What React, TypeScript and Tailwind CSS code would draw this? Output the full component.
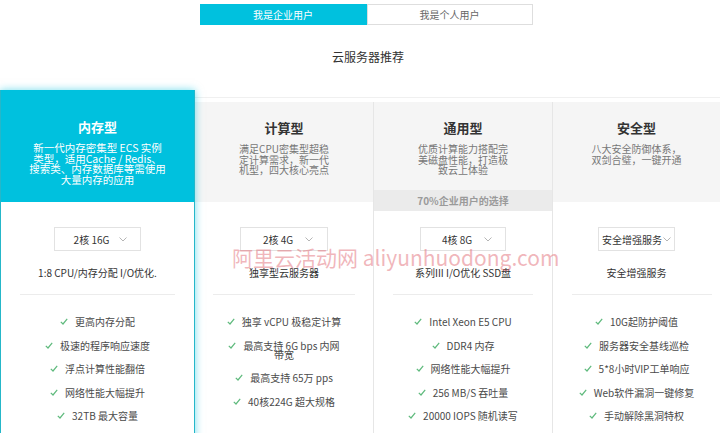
import React from "react";

const Check = () => (
  <svg width="8" height="7" viewBox="0 0 8 7" className="inline-block mr-[7px] align-[1px]">
    <polyline points="0.8,3.8 3,6 7.2,0.8" fill="none" stroke="#5fba7d" strokeWidth="1.2" />
  </svg>
);

const Chevron = () => (
  <svg width="8" height="5" viewBox="0 0 8 5">
    <polyline points="0.5,0.5 4,4 7.5,0.5" fill="none" stroke="#b5b5b5" strokeWidth="1" />
  </svg>
);

function Select({ label, w, gap }: { label: string; w: string; gap: string }) {
  return (
    <div className={`mx-auto h-[24px] border border-[#e2e2e2] bg-white flex items-center justify-center text-[10px] text-[#333] ${w} ${gap}`}>
      <span>{label}</span>
      <Chevron />
    </div>
  );
}

function Features({ items }: { items: React.ReactNode[] }) {
  return (
    <div className="mt-[15px] flex flex-col text-[10px] text-[#4a4a4a] text-center">
      {items.map((it, i) => (
        <div key={i} className="leading-[9px] py-[7.25px]">
          <Check />
          {it}
        </div>
      ))}
    </div>
  );
}

function Divider({ mx }: { mx: string }) {
  return <div className={`mt-[14px] h-px bg-[#ececec] ${mx}`} />;
}

export default function App() {
  return (
    <div className="relative w-[720px] h-[433px] overflow-hidden bg-white font-['Noto_Sans_CJK_SC',sans-serif]">
      {/* tabs */}
      <div className="pt-[4px] flex justify-center pl-[12px]">
        <div className="flex h-[21px] text-[10px]">
          <div className="w-[167px] bg-[#00c1de] text-white flex items-center justify-center">我是企业用户</div>
          <div className="w-[166px] border border-[#dedede] text-[#666] flex items-center justify-center">我是个人用户</div>
        </div>
      </div>

      <div className="mt-[24px] text-center text-[12px] text-[#333] leading-[16px] pl-[16px]">云服务器推荐</div>

      {/* cards */}
      <div className="mt-[25px] flex h-[360px]">
        {/* card 1 selected */}
        <div className="relative z-10 w-[195px] shrink-0 border-x border-[#25b7c9] bg-white shadow-[0_0_8px_rgba(0,193,222,0.55)]">
          <div className="h-[112px] bg-[#00c1de] text-white text-center pt-[29px]">
            <div className="text-[13px] font-bold leading-[16px]">内存型</div>
            <div className="mt-[8px] text-[10.5px] leading-[10.7px]">
              新一代内存密集型 ECS 实例
              <br />
              类型，适用Cache / Redis、
              <br />
              搜索类、内存数据库等需使用
              <br />
              大量内存的应用
            </div>
          </div>
          <div className="pt-[25px]">
            <Select label="2核 16G" w="w-[87px]" gap="gap-[10px] pl-[6px]" />
            <div className="mt-[15px] text-center text-[10px] text-[#333] leading-[14px]">1:8 CPU/内存分配 I/O优化.</div>
            <Divider mx="mx-[19px]" />
            <Features items={["更高内存分配", "极速的程序响应速度", "浮点计算性能翻倍", "网络性能大幅提升", "32TB 最大容量"]} />
          </div>
        </div>

        {/* rest */}
        <div className="flex-1 flex mt-[7px] border-t border-[#f0f0f0] pt-[4px]">
          {/* card 2 */}
          <div className="w-[178px] shrink-0">
            <div className="h-[100px] bg-[#f5f5f5] text-center pt-[18px]">
              <div className="text-[13px] font-bold leading-[16px] text-[#333]">计算型</div>
              <div className="mt-[8px] text-[10px] leading-[10.7px] text-[#777]">
                满足CPU密集型超稳
                <br />
                定计算需求，新一代
                <br />
                机型，四大核心亮点
              </div>
            </div>
            <div className="pt-[25px]">
              <Select label="2核 4G" w="w-[88px]" gap="gap-[12px] pl-[8px]" />
              <div className="mt-[15px] text-center text-[10px] text-[#333] leading-[14px]">独享型云服务器</div>
              <Divider mx="mx-[18px]" />
              <Features
                items={[
                  "独享 vCPU 极稳定计算",
                  <>
                    最高支持 6G bps 内网
                    <br />
                    带宽
                  </>,
                  "最高支持 65万 pps",
                  "40核224G 超大规格",
                ]}
              />
            </div>
          </div>

          {/* card 3 */}
          <div className="w-[180px] shrink-0 border-x border-[#e6e6e6]">
            <div className="h-[88px] bg-[#f5f5f5] text-center pt-[18px]">
              <div className="text-[13px] font-bold leading-[16px] text-[#333]">通用型</div>
              <div className="mt-[8px] text-[10px] leading-[10.7px] text-[#777]">
                优质计算能力搭配完
                <br />
                美磁盘性能，打造极
                <br />
                致云上体验
              </div>
            </div>
            <div className="h-[21px] bg-[#ebebeb] flex items-center justify-center text-[10px] font-bold text-[#9a9a9a]">
              70%企业用户的选择
            </div>
            <div className="pt-[16px]">
              <Select label="4核 8G" w="w-[86px]" gap="gap-[12px] pl-[8px]" />
              <div className="mt-[15px] text-center text-[10px] text-[#333] leading-[14px]">系列III I/O优化 SSD盘</div>
              <Divider mx="mx-[19px]" />
              <Features items={["Intel Xeon E5 CPU", "DDR4 内存", "网络性能大幅提升", "256 MB/S 吞吐量", "20000 IOPS 随机读写"]} />
            </div>
          </div>

          {/* card 4 */}
          <div className="flex-1">
            <div className="h-[100px] bg-[#f5f5f5] text-center pt-[18px]">
              <div className="text-[13px] font-bold leading-[16px] text-[#333]">安全型</div>
              <div className="mt-[8px] text-[10px] leading-[10.7px] text-[#777]">
                八大安全防御体系，
                <br />
                双剑合璧，一键开通
              </div>
            </div>
            <div className="pt-[25px]">
              <Select label="安全增强服务" w="w-[77px]" gap="gap-[1px]" />
              <div className="mt-[15px] text-center text-[10px] text-[#333] leading-[14px]">安全增强服务</div>
              <Divider mx="mx-[19px] mr-[8px]" />
              <Features items={["10G起防护阈值", "服务器安全基线巡检", "5*8小时VIP工单响应", "Web软件漏洞一键修复", "手动解除黑洞特权"]} />
            </div>
          </div>
        </div>
      </div>

      {/* watermark */}
      <div className="absolute left-[232px] top-[244px] z-20 text-[21px] leading-[26px] text-[rgba(226,110,120,0.5)] whitespace-nowrap pointer-events-none">
        阿里云活动网 aliyunhuodong.com
      </div>
    </div>
  );
}
